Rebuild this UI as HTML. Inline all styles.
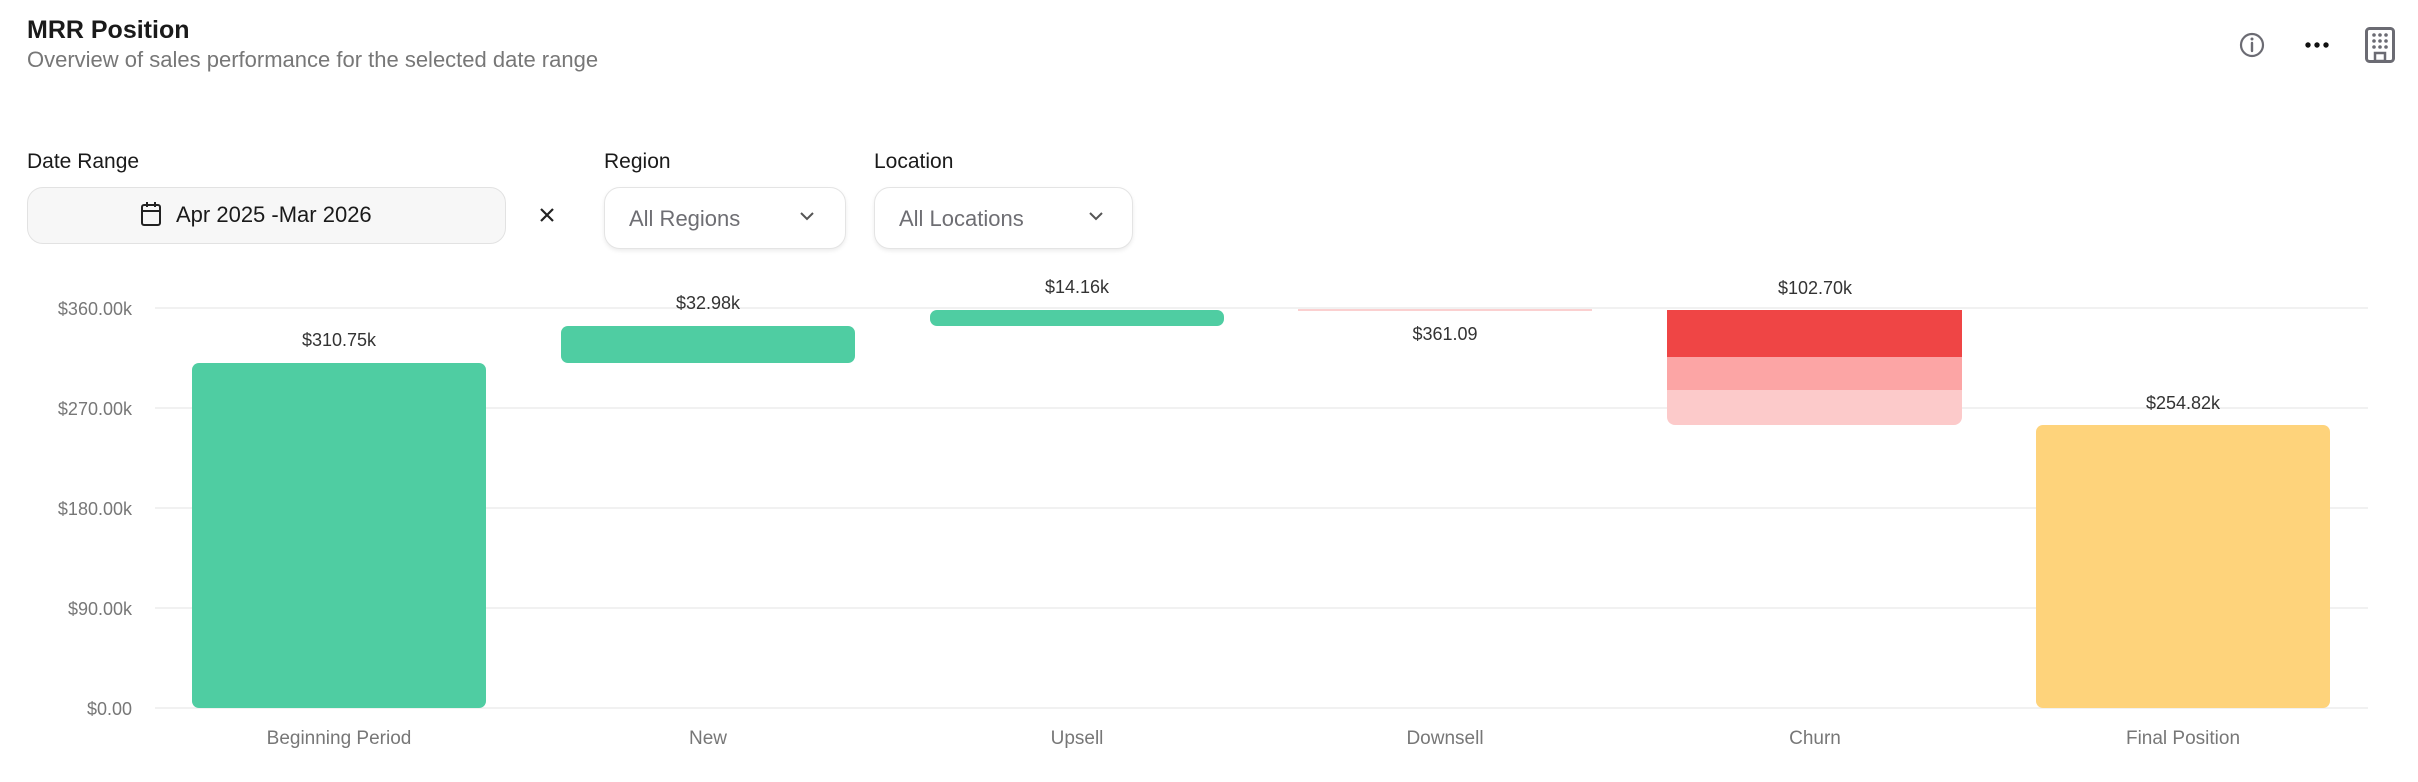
<!DOCTYPE html>
<html><head><meta charset="utf-8"><style>
body{margin:0;width:2418px;height:782px;background:#fff;font-family:"Liberation Sans",sans-serif;position:relative;overflow:hidden}
.a{position:absolute}
.title{left:27px;top:16px;font-size:25px;font-weight:bold;color:#1a1a1a}
.sub{left:27px;top:47px;font-size:22px;color:#777}
.lbl{font-size:21px;color:#1a1a1a}
.box{border-radius:16px;box-sizing:border-box}
</style></head><body>
<div class="a title">MRR Position</div>
<div class="a sub">Overview of sales performance for the selected date range</div>

<svg class="a" style="left:2236px;top:29px" width="32" height="32" viewBox="0 0 32 32"><circle cx="16" cy="16" r="11" fill="none" stroke="#6b6b73" stroke-width="2.2"/><line x1="16" y1="14" x2="16" y2="22" stroke="#6b6b73" stroke-width="2.4" stroke-linecap="round"/><circle cx="16" cy="10" r="1.5" fill="#6b6b73"/></svg>
<svg class="a" style="left:2303px;top:37px" width="30" height="16"><circle cx="5" cy="8" r="2.7" fill="#111"/><circle cx="14" cy="8" r="2.7" fill="#111"/><circle cx="23" cy="8" r="2.7" fill="#111"/></svg>
<svg class="a" style="left:2364px;top:26px" width="32" height="38" viewBox="0 0 32 38"><rect x="2.5" y="2.5" width="27" height="33" rx="3" fill="none" stroke="#6b6b73" stroke-width="3"/><g fill="#6b6b73"><circle cx="10" cy="9" r="1.8"/><circle cx="16" cy="9" r="1.8"/><circle cx="22" cy="9" r="1.8"/><circle cx="10" cy="15" r="1.8"/><circle cx="16" cy="15" r="1.8"/><circle cx="22" cy="15" r="1.8"/><circle cx="10" cy="21" r="1.8"/><circle cx="16" cy="21" r="1.8"/><circle cx="22" cy="21" r="1.8"/></g><rect x="11" y="27" width="10" height="8" fill="none" stroke="#6b6b73" stroke-width="2.5"/></svg>

<div class="a lbl" style="left:27px;top:150px">Date Range</div>
<div class="a lbl" style="left:604px;top:150px">Region</div>
<div class="a lbl" style="left:874px;top:150px">Location</div>

<div class="a box" style="left:27px;top:187px;width:479px;height:57px;background:#f7f7f7;border:1px solid #e2e2e2"></div>
<svg class="a" style="left:140px;top:200px" width="22" height="28" viewBox="0 0 22 28"><rect x="2" y="5" width="18" height="20" rx="2" fill="none" stroke="#222" stroke-width="2"/><line x1="2" y1="11" x2="20" y2="11" stroke="#222" stroke-width="2"/><line x1="7" y1="2" x2="7" y2="7" stroke="#222" stroke-width="2"/><line x1="15" y1="2" x2="15" y2="7" stroke="#222" stroke-width="2"/></svg>
<div class="a" style="left:176px;top:202px;font-size:22px;color:#1a1a1a;font-weight:500">Apr 2025 -Mar 2026</div>
<svg class="a" style="left:538px;top:206px" width="18" height="18"><path d="M3 3L15 15M15 3L3 15" stroke="#222" stroke-width="2.2"/></svg>

<div class="a box" style="left:604px;top:187px;width:242px;height:62px;background:#fff;border:1px solid #e4e4e4;box-shadow:0 2px 4px rgba(0,0,0,.08)"></div>
<div class="a" style="left:629px;top:206px;font-size:22px;color:#6e6e73">All Regions</div>
<svg class="a" style="left:798px;top:210px" width="18" height="12"><path d="M3 3L9 9L15 3" fill="none" stroke="#555" stroke-width="2"/></svg>
<div class="a box" style="left:874px;top:187px;width:259px;height:62px;background:#fff;border:1px solid #e4e4e4;box-shadow:0 2px 4px rgba(0,0,0,.08)"></div>
<div class="a" style="left:899px;top:206px;font-size:22px;color:#6e6e73">All Locations</div>
<svg class="a" style="left:1087px;top:210px" width="18" height="12"><path d="M3 3L9 9L15 3" fill="none" stroke="#555" stroke-width="2"/></svg>

<svg class="a" style="left:0;top:0" width="2418" height="782">
<g stroke="#f1f1f1" stroke-width="2">
<line x1="155" y1="308" x2="2368" y2="308"/><line x1="155" y1="408" x2="2368" y2="408"/><line x1="155" y1="508" x2="2368" y2="508"/><line x1="155" y1="608" x2="2368" y2="608"/><line x1="155" y1="708" x2="2368" y2="708"/>
</g>
<g font-family="Liberation Sans" font-size="18" fill="#777" text-anchor="end">
<text x="132" y="315">$360.00k</text><text x="132" y="415">$270.00k</text><text x="132" y="515">$180.00k</text><text x="132" y="615">$90.00k</text><text x="132" y="715">$0.00</text>
</g>
<rect x="192" y="363" width="294" height="345" rx="7" fill="#4fcda2"/>
<rect x="561" y="326" width="294" height="37" rx="7" fill="#4fcda2"/>
<rect x="930" y="310" width="294" height="16" rx="7" fill="#4fcda2"/>
<rect x="1298" y="309" width="294" height="2" fill="#fbd0d0"/>
<path d="M1667 310H1962V417a8 8 0 0 1-8 8H1675a8 8 0 0 1-8-8Z" fill="#fccaca"/>
<rect x="1667" y="357" width="295" height="33" fill="#fca5a5"/>
<rect x="1667" y="310" width="295" height="47" fill="#ef4545"/>
<rect x="2036" y="425" width="294" height="283" rx="7" fill="#fed37b"/>
<g font-family="Liberation Sans" font-size="18" fill="#333" text-anchor="middle">
<text x="339" y="346">$310.75k</text><text x="708" y="309">$32.98k</text><text x="1077" y="293">$14.16k</text><text x="1445" y="340">$361.09</text><text x="1815" y="294">$102.70k</text><text x="2183" y="409">$254.82k</text>
</g>
<g font-family="Liberation Sans" font-size="19" fill="#777" text-anchor="middle">
<text x="339" y="744">Beginning Period</text><text x="708" y="744">New</text><text x="1077" y="744">Upsell</text><text x="1445" y="744">Downsell</text><text x="1815" y="744">Churn</text><text x="2183" y="744">Final Position</text>
</g>
</svg>
</body></html>
